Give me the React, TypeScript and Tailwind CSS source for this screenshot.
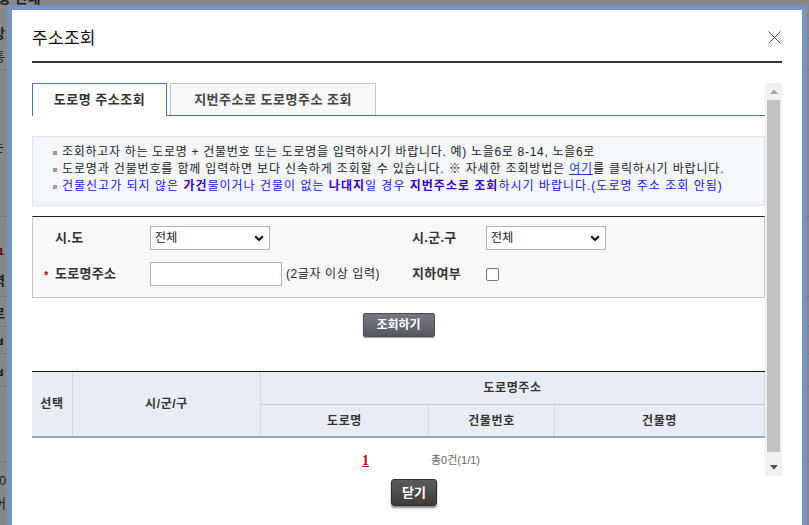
import React from "react";

function BackgroundPage() {
  return (
    <div className="w-full h-full text-[13px] leading-[13px] text-[#1c1c1c] font-bold">
      <div className="h-[48px] border-b border-[#767676]">
        <div className="-mt-[9px] -ml-[2px] text-[14px] leading-[14px]">향 안내</div>
        <div className="mt-[22px] -ml-[7px]">방</div>
      </div>
      <div className="h-[31px] border-b border-[#767676] pt-[11px]">
        <div className="-ml-[7px] font-normal">통</div>
      </div>
      <div className="h-[147px] border-b border-[#767676] pt-[70px]">
        <div className="-ml-[8px] font-normal">는</div>
      </div>
      <div className="h-[80px] border-b border-[#767676] pt-[30px]">
        <div className="-ml-[8px] text-[#5a1010]">구</div>
        <div className="-ml-[7px] mt-[14px]">역</div>
      </div>
      <div className="h-[30px] border-b border-[#767676] pt-[10px]">
        <div className="-ml-[7px]">로</div>
      </div>
      <div className="h-[27px] border-b border-[#767676] pt-[8px]">
        <div className="-ml-[7px]">ㅂ</div>
      </div>
      <div className="h-[33px] border-b border-[#767676] pt-[12px]">
        <div className="-ml-[7px]">ㅂ</div>
      </div>
      <div className="h-[75px] border-b border-[#767676]"></div>
      <div className="pt-[12px] font-normal">
        <div className="-ml-[1px]">0</div>
        <div className="-ml-[6px] mt-[10px]">어</div>
      </div>
    </div>
  );
}

function Chevron() {
  return (
    <svg width="10" height="7" viewBox="0 0 10 7" className="block">
      <path d="M1.2 1.2 L5 5 L8.8 1.2" fill="none" stroke="#111" strokeWidth="2" />
    </svg>
  );
}

function SelectBox({ width }: { width: string }) {
  return (
    <div
      className={`${width} h-[24px] border border-[#b2b2b2] bg-white flex items-center justify-between pl-[4px] pr-[5px] text-[12px] text-[#222] font-normal`}
    >
      <span>전체</span>
      <Chevron />
    </div>
  );
}

function Scrollbar() {
  return (
    <div className="w-[17px] h-full bg-[#f1f1f1] flex flex-col">
      <div className="h-[17px] flex items-center justify-center">
        <svg width="8" height="5" viewBox="0 0 8 5">
          <polygon points="0,5 4,0.5 8,5" fill="#a3a3a3" />
        </svg>
      </div>
      <div className="mx-[2px] h-[352px] bg-[#c1c1c1]" />
      <div className="flex-1" />
      <div className="h-[17px] flex items-center justify-center">
        <svg width="8" height="5" viewBox="0 0 8 5">
          <polygon points="0,0 8,0 4,4.5" fill="#505050" />
        </svg>
      </div>
    </div>
  );
}

export default function App() {
  return (
    <div className="relative w-[809px] h-[525px] overflow-hidden bg-[#878787] font-['Liberation_Sans','Noto_Sans_CJK_KR',sans-serif]">
      <BackgroundPage />

      <div className="absolute left-[7px] top-[5px] w-[800px] h-[540px] border-[5px] border-[#7594c1] bg-white px-[20px]">
        {/* header */}
        <div className="flex justify-between pt-[17px] pb-[10px] border-b-2 border-[#333]">
          <h1 className="text-[17px] leading-[24px] text-[#111] font-normal tracking-[0.3px]">주소조회</h1>
          <svg width="13" height="13" viewBox="0 0 13 13" className="mt-[4px] mr-[1px]">
            <path d="M0.5 0.5 L12.5 12.5 M12.5 0.5 L0.5 12.5" stroke="#4a4f5c" strokeWidth="1" fill="none" />
          </svg>
        </div>

        {/* body */}
        <div className="mt-[20px] h-[393px] flex">
          <div className="w-[733px] overflow-hidden">
            {/* tabs */}
            <div className="flex items-start gap-[3px] h-[33px] border-b border-[#4a72ad]">
              <div className="w-[135px] h-[33px] -mb-px bg-white border border-b-0 border-[#4a72ad] flex items-center justify-center text-[13px] font-bold text-[#333] tracking-[0.5px]">
                도로명 주소조회
              </div>
              <div className="w-[206px] h-[32px] bg-[#f8f8f8] border border-b-0 border-[#c4c4c4] flex items-center justify-center text-[13px] font-bold text-[#444] tracking-[0.5px]">
                지번주소로 도로명주소 조회
              </div>
            </div>

            {/* info box */}
            <div className="mt-[20px] h-[70px] border border-[#dde4ee] bg-[#f3f6fb] pl-[20px] pt-[7px] text-[12px] leading-[17px] text-[#222]">
              <div className="flex items-center tracking-[0.7px]">
                <span className="w-[4px] h-[4px] bg-[#9a9a9a] mr-[5px]" />
                <span>조회하고자 하는 도로명 + 건물번호 또는 도로명을 입력하시기 바랍니다. 예) 노을6로 8-14, 노을6로</span>
              </div>
              <div className="flex items-center tracking-[0.85px]">
                <span className="w-[4px] h-[4px] bg-[#9a9a9a] mr-[5px]" />
                <span>
                  도로명과 건물번호를 함께 입력하면 보다 신속하게 조회할 수 있습니다. ※ 자세한 조회방법은{" "}
                  <span className="text-[#1d3fb8] underline">여기</span>를 클릭하시기 바랍니다.
                </span>
              </div>
              <div className="flex items-center tracking-[1px]">
                <span className="w-[4px] h-[4px] bg-[#9a9a9a] mr-[5px]" />
                <span className="text-[#1414f0]">
                  건물신고가 되지 않은 <b className="text-[#3300cc]">가건</b>물이거나 건물이 없는{" "}
                  <b className="text-[#3300cc]">나대지</b>일 경우{" "}
                  <b className="text-[#3300cc]">지번주소로 조회</b>하시기 바랍니다.(도로명 주소 조회 안됨)
                </span>
              </div>
            </div>

            {/* search form */}
            <div className="mt-[10px] h-[82px] border border-[#c6c6c6] border-t-[#222] bg-[#f8f8f8] pl-[22px] pt-[9px]">
              <div className="grid grid-cols-[95px_262px_74px_1fr] grid-rows-[24px_24px] gap-y-[12px] items-center text-[13px] font-bold text-[#333] tracking-[0.3px]">
                <div>시.도</div>
                <div>
                  <SelectBox width="w-[120px]" />
                </div>
                <div>시.군.구</div>
                <div>
                  <SelectBox width="w-[120px]" />
                </div>

                <div className="flex items-center -ml-[11px]">
                  <span className="w-[11px] text-[11px] leading-[11px] text-[#c00000] font-bold pt-[3px]">*</span>
                  <span>도로명주소</span>
                </div>
                <div className="flex items-center">
                  <input
                    type="text"
                    className="w-[132px] h-[24px] border border-[#b2b2b2] bg-white outline-none"
                  />
                  <span className="ml-[4px] text-[12px] font-normal text-[#222] tracking-[0.6px]">(2글자 이상 입력)</span>
                </div>
                <div>지하여부</div>
                <div>
                  <div className="w-[13px] h-[13px] border border-[#767676] rounded-[2px] bg-white" />
                </div>
              </div>
            </div>

            {/* search button */}
            <div className="mt-[15px] flex justify-center">
              <div className="w-[72px] h-[24px] rounded-[2px] border border-[#4b4f55] bg-gradient-to-b from-[#757980] to-[#55595f] flex items-center justify-center text-[12px] font-bold text-white shadow-[0_1px_1px_rgba(0,0,0,0.35)]">
                조회하기
              </div>
            </div>

            {/* result table */}
            <div className="mt-[34px] border-t border-t-[#111] border-b-2 border-b-[#a3a3a3] bg-[#e8edf5] grid grid-cols-[41px_188px_168px_126px_210px] grid-rows-[33px_31px] text-[12px] font-bold text-[#333] tracking-[0.6px]">
              <div className="row-span-2 border-r border-[#d2d8e1] flex items-center justify-center">선택</div>
              <div className="row-span-2 border-r border-[#d2d8e1] flex items-center justify-center">시/군/구</div>
              <div className="col-span-3 border-b border-[#c3c9d2] border-r border-r-[#d2d8e1] flex items-center justify-center">
                도로명주소
              </div>
              <div className="border-r border-[#d2d8e1] flex items-center justify-center">도로명</div>
              <div className="border-r border-[#d2d8e1] flex items-center justify-center">건물번호</div>
              <div className="border-r border-[#d2d8e1] flex items-center justify-center">건물명</div>
            </div>

            {/* pagination */}
            <div className="mt-[14px] pl-[330px] flex items-center gap-[62px] h-[17px]">
              <span className="font-['Liberation_Serif',serif] text-[14px] font-bold text-[#cc0022] underline">1</span>
              <span className="text-[11px] text-[#666]">총0건(1/1)</span>
            </div>
          </div>
          <Scrollbar />
        </div>

        {/* footer */}
        <div className="pt-[3px] pl-[359px]">
          <div className="w-[46px] h-[27px] rounded-[3px] border border-[#2f2f2f] bg-gradient-to-b from-[#5c5c5c] to-[#3c3c3c] flex items-center justify-center text-[13px] font-bold text-white shadow-[0_2px_2px_rgba(0,0,0,0.45)]">
            닫기
          </div>
        </div>
      </div>
    </div>
  );
}
